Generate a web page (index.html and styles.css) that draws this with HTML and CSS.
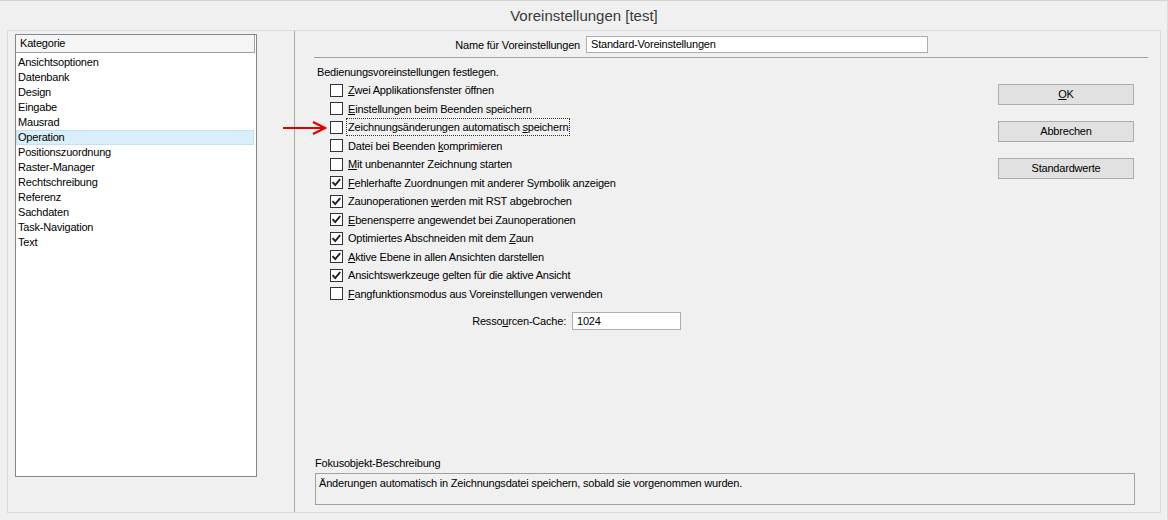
FILE: index.html
```html
<!DOCTYPE html>
<html lang="de">
<head>
<meta charset="utf-8">
<title>Voreinstellungen [test]</title>
<link rel="stylesheet" href="styles.css">
</head>
<body>
<div class="window">
  <div class="titlebar">Voreinstellungen [test]</div>
  <div class="frame">
    <div class="sidebar">
      <div class="listbox">
        <div class="list-header">Kategorie</div>
        <div class="list-items">
          <div class="list-item">Ansichtsoptionen</div>
          <div class="list-item">Datenbank</div>
          <div class="list-item">Design</div>
          <div class="list-item">Eingabe</div>
          <div class="list-item">Mausrad</div>
          <div class="list-item selected">Operation</div>
          <div class="list-item">Positionszuordnung</div>
          <div class="list-item">Raster-Manager</div>
          <div class="list-item">Rechtschreibung</div>
          <div class="list-item">Referenz</div>
          <div class="list-item">Sachdaten</div>
          <div class="list-item">Task-Navigation</div>
          <div class="list-item">Text</div>
        </div>
      </div>
    </div>
    <div class="pane">
      <div class="name-row">
        <span class="name-label">Name für Voreinstellungen</span>
        <div class="textbox name-input">Standard-Voreinstellungen</div>
      </div>
      <div class="rule"></div>
      <div class="content">
        <div class="options-col">
          <div class="heading">Bedienungsvoreinstellungen festlegen.</div>
          <div class="options">
            <div class="opt"><span class="cb"></span><span class="lbl"><u>Z</u>wei Applikationsfenster öffnen</span></div>
            <div class="opt"><span class="cb"></span><span class="lbl"><u>E</u>instellungen beim Beenden speichern</span></div>
            <div class="opt"><span class="cb"></span><span class="lbl focus">Zeichnungsänderungen automatisch <u>s</u>peichern</span></div>
            <div class="opt"><span class="cb"></span><span class="lbl">Datei bei Beenden <u>k</u>omprimieren</span></div>
            <div class="opt"><span class="cb"></span><span class="lbl"><u>M</u>it unbenannter Zeichnung starten</span></div>
            <div class="opt"><span class="cb checked"><svg viewBox="0 0 13 13" width="13" height="13"><path d="M2.5 6.2 L5.2 9 L10.2 3.2" fill="none" stroke="#222" stroke-width="1.9"/></svg></span><span class="lbl"><u>F</u>ehlerhafte Zuordnungen mit anderer Symbolik anzeigen</span></div>
            <div class="opt"><span class="cb checked"><svg viewBox="0 0 13 13" width="13" height="13"><path d="M2.5 6.2 L5.2 9 L10.2 3.2" fill="none" stroke="#222" stroke-width="1.9"/></svg></span><span class="lbl">Zaunoperationen <u>w</u>erden mit RST abgebrochen</span></div>
            <div class="opt"><span class="cb checked"><svg viewBox="0 0 13 13" width="13" height="13"><path d="M2.5 6.2 L5.2 9 L10.2 3.2" fill="none" stroke="#222" stroke-width="1.9"/></svg></span><span class="lbl"><u>E</u>benensperre angewendet bei Zaunoperationen</span></div>
            <div class="opt"><span class="cb checked"><svg viewBox="0 0 13 13" width="13" height="13"><path d="M2.5 6.2 L5.2 9 L10.2 3.2" fill="none" stroke="#222" stroke-width="1.9"/></svg></span><span class="lbl">Optimiertes Abschneiden mit dem <u>Z</u>aun</span></div>
            <div class="opt"><span class="cb checked"><svg viewBox="0 0 13 13" width="13" height="13"><path d="M2.5 6.2 L5.2 9 L10.2 3.2" fill="none" stroke="#222" stroke-width="1.9"/></svg></span><span class="lbl"><u>A</u>ktive Ebene in allen Ansichten darstellen</span></div>
            <div class="opt"><span class="cb checked"><svg viewBox="0 0 13 13" width="13" height="13"><path d="M2.5 6.2 L5.2 9 L10.2 3.2" fill="none" stroke="#222" stroke-width="1.9"/></svg></span><span class="lbl">Ansichtswerkzeuge gelten für die aktive Ansicht</span></div>
            <div class="opt"><span class="cb"></span><span class="lbl"><u>F</u>angfunktionsmodus aus Voreinstellungen verwenden</span></div>
          </div>
          <div class="cache-row">
            <span class="cache-label">Resso<u>u</u>rcen-Cache:</span>
            <div class="textbox cache-input">1024</div>
          </div>
        </div>
        <div class="buttons">
          <div class="btn"><u>O</u>K</div>
          <div class="btn">Abbrechen</div>
          <div class="btn">Standardwerte</div>
        </div>
      </div>
      <div class="desc">
        <div class="desc-label">Fokusobjekt-Beschreibung</div>
        <div class="desc-box">Änderungen automatisch in Zeichnungsdatei speichern, sobald sie vorgenommen wurden.</div>
      </div>
    </div>
  </div>
  <svg class="arrow" viewBox="0 0 44 14" width="44" height="14"><path d="M0 7 H41" stroke="#e00000" stroke-width="2.2" fill="none"/><path d="M30 1 L42 7 L30 13" stroke="#e00000" stroke-width="2.2" fill="none"/></svg>
</div>
</body>
</html>
```
FILE: styles.css
```css
* { box-sizing: border-box; }
html, body { margin: 0; padding: 0; }
body {
  width: 1168px;
  height: 520px;
  overflow: hidden;
  background: #f0f0f0;
  font-family: "Liberation Sans", Arial, sans-serif;
  font-size: 11px;
  letter-spacing: -0.2px;
  color: #000;
}
.window {
  position: relative;
  width: 1168px;
  height: 520px;
  border-top: 1px solid #d4d4d4;
  border-right: 1px solid #dcdcdc;
}
.titlebar {
  height: 29px;
  display: flex;
  align-items: center;
  justify-content: center;
  font-size: 15px;
  letter-spacing: 0;
  color: #3a3a3a;
  padding-left: 1px;
}
.frame {
  margin-left: 7px;
  width: 1154px;
  height: 483px;
  border: 1px solid #dadada;
  display: flex;
}
.sidebar {
  width: 287px;
  border-right: 1px solid #a8a8a8;
  padding: 3px 0 0 7px;
}
.listbox {
  width: 242px;
  height: 443px;
  background: #fff;
  border: 1px solid #828790;
}
.list-header {
  height: 18px;
  line-height: 17px;
  width: 239px;
  padding-left: 4px;
  background: #f5f5f5;
  border-bottom: 1px solid #a0a0a0;
  border-right: 1px solid #a0a0a0;
}
.list-items {
  padding-top: 2px;
}
.list-item {
  height: 15px;
  line-height: 15px;
  padding-left: 2px;
  width: 238px;
  white-space: nowrap;
}
.list-item.selected {
  background: #d9f0fb;
  box-shadow: inset 0 0 0 1px #bfe3f5;
}
.pane {
  flex: 1;
  display: flex;
  flex-direction: column;
}
.name-row {
  display: flex;
  align-items: center;
  margin-top: 5px;
  height: 17px;
}
.name-label {
  width: 291px;
  text-align: right;
  padding-right: 6px;
  white-space: nowrap;
}
.textbox {
  background: #fff;
  border: 1px solid #abadb3;
  padding-left: 4px;
  white-space: nowrap;
}
.name-input {
  width: 342px;
  height: 17px;
  line-height: 15px;
}
.rule {
  height: 1px;
  background: #a0a0a0;
  margin: 4px 12px 0 19px;
}
.content {
  display: flex;
}
.options-col {
  flex: 1;
  padding-left: 22px;
}
.heading {
  margin-top: 7px;
  line-height: 15px;
  height: 15px;
}
.options {
  margin-top: 1px;
  padding-left: 13px;
}
.opt {
  height: 18.5px;
  display: flex;
  align-items: center;
}
.cb {
  width: 13px;
  height: 13px;
  border: 1px solid #333;
  background: #fff;
  flex: none;
  position: relative;
}
.cb svg {
  position: absolute;
  left: -1px;
  top: -1px;
}
.lbl {
  margin-left: 3px;
  padding: 1px 1px;
  line-height: 14px;
  white-space: nowrap;
  border: 1px dotted transparent;
}
.lbl.focus {
  border-color: #333;
}
.cache-row {
  display: flex;
  align-items: center;
  margin-top: 9px;
  height: 18px;
}
.cache-label {
  width: 255px;
  text-align: right;
  padding-right: 6px;
  white-space: nowrap;
}
.cache-input {
  width: 109px;
  height: 18px;
  line-height: 16px;
}
.buttons {
  width: 136px;
  margin: 26px 26px 0 0;
  display: flex;
  flex-direction: column;
  gap: 16px;
}
.btn {
  height: 21px;
  line-height: 19px;
  text-align: center;
  background: #e1e1e1;
  border: 1px solid #adadad;
}
.desc {
  margin-top: auto;
  margin-bottom: 7px;
  padding-left: 20px;
}
.desc-label {
  line-height: 15px;
  height: 15px;
  margin-bottom: 2px;
}
.desc-box {
  width: 820px;
  height: 32px;
  border: 1px solid #a0a0a0;
  padding: 2px 0 0 3px;
  line-height: 14px;
  white-space: nowrap;
}
.arrow {
  position: absolute;
  left: 283px;
  top: 120px;
}
```
